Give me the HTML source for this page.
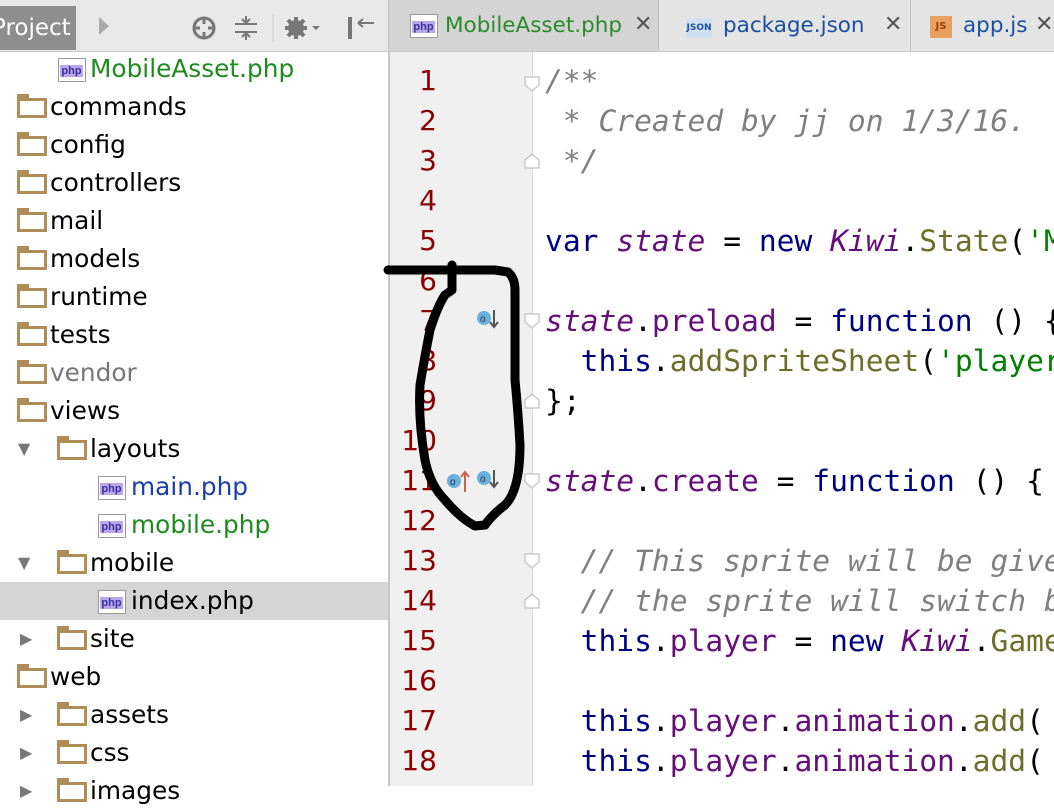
<!DOCTYPE html><html><head><style>
body{margin:0;width:1054px;height:786px;overflow:hidden;background:#fff;font-family:"DejaVu Sans",sans-serif;position:relative}
.a{position:absolute}
#hdr{left:0;top:0;width:388px;height:52px;background:#e8e8e8;border-bottom:1px solid #c8c8c8;box-sizing:border-box}
#tabs{left:390px;top:0;width:664px;height:52px;background:#e4e4e4;border-bottom:1px solid #c8c8c8;box-sizing:border-box}
#side{left:388px;top:0;width:2px;height:786px;background:#c6c6c6}
.row{position:absolute;left:0;width:388px;height:38px;font-size:24.8px;line-height:38px;color:#000;white-space:nowrap}
.fold{position:absolute;top:10px;width:30px;height:20px;border:3px solid #b08c58;box-sizing:border-box;background:#fff}
.fold:before{content:"";position:absolute;left:-3px;top:-7px;width:12px;height:5px;background:#b08c58}
.php{position:absolute;top:8px;width:26px;height:22px;background:#fff;border:1px solid #999;font-size:11px;line-height:12px;font-weight:bold;color:#3a2fa0;font-family:"Liberation Sans",sans-serif}
.php i{position:absolute;left:1px;top:6px;width:23px;height:12px;background:#b8a8e8;font-style:normal;text-align:center}
.arr{position:absolute;font-size:16px;color:#777}
#gut{left:390px;top:52px;width:142px;height:734px;background:#f0f0f0;border-right:1px solid #dcdcdc}
.ln{position:absolute;left:390px;width:47px;text-align:right;font-size:28px;color:#8b0000;font-family:"DejaVu Sans",sans-serif;height:40px;line-height:40px}
.cd{position:absolute;left:545px;font-family:"DejaVu Sans Mono",monospace;font-size:29.6px;height:40px;line-height:40px;white-space:pre;color:#000}
.k{color:#000080}.p{color:#660e7a}.pi{color:#660e7a;font-style:italic}.c{color:#808080;font-style:italic}.f{color:#6e6e2a}.s{color:#008000}
</style></head><body>
<div class="a" id="hdr">
<div class="a" style="left:0;top:6px;width:76px;height:44px;background:#8e8e8e;color:#fff;font-size:23px;line-height:44px;overflow:hidden;white-space:nowrap;text-indent:-8px">Project</div>
<div class="a" style="left:99px;top:17px;width:0;height:0;border-left:10px solid #aaa;border-top:9px solid transparent;border-bottom:9px solid transparent"></div>
<svg class="a" style="left:190px;top:14px" width="190" height="28"><circle cx="14" cy="14" r="10" fill="none" stroke="#777" stroke-width="3"/><path d="M14 4v6M14 18v6M4 14h6M18 14h6" stroke="#777" stroke-width="3"/><path d="M45 10h22M45 18h22M56 2v6M56 20v6M52 5l4 4 4-4M52 23l4-4 4 4" stroke="#777" stroke-width="2" fill="none"/><line x1="83" y1="0" x2="83" y2="28" stroke="#ccc"/><circle cx="106" cy="14" r="8" fill="#777"/><circle cx="106" cy="14" r="3" fill="#e8e8e8"/><path d="M106 3v22M95 14h22M98 6l16 16M114 6l-16 16" stroke="#777" stroke-width="4"/><path d="M122 12l4 4 4-4z" fill="#777"/><rect x="158" y="3" width="4" height="22" fill="#777"/><path d="M168 9h16M168 9l5-4M168 9l5 4" stroke="#777" stroke-width="2" fill="none"/></svg>
</div>
<div class="a" id="tabs">
<div class="a" style="left:0;top:0;width:268px;height:51px;background:#d4d4d4"></div>
<div class="php" style="left:20px;top:14px"><i>php</i></div><div class="a" style="left:55px;top:13px;font-size:21.5px;color:#2a8a2a">MobileAsset.php</div><div class="a" style="left:244px;top:12px;font-size:22px;color:#555">✕</div>
<div class="a" style="left:268px;top:0;width:1px;height:51px;background:#c0c0c0"></div>
<div class="a" style="left:296px;top:18px;width:26px;height:20px;background:#cfe0f0;font-size:9px;font-weight:bold;color:#2050a0;text-align:center;line-height:20px">JSON</div><div class="a" style="left:333px;top:13px;font-size:21.5px;color:#1b4fa0">package.json</div><div class="a" style="left:494px;top:12px;font-size:22px;color:#555">✕</div>
<div class="a" style="left:520px;top:0;width:1px;height:51px;background:#c0c0c0"></div>
<div class="a" style="left:540px;top:16px;width:22px;height:22px;background:#e8a060;font-size:10px;font-weight:bold;color:#a04000;text-align:center;line-height:22px">JS</div><div class="a" style="left:573px;top:13px;font-size:21.5px;color:#1b4fa0">app.js</div><div class="a" style="left:645px;top:12px;font-size:22px;color:#555">✕</div>
</div>
<div class="a" id="side"></div>
<div class="row" style="top:50px"><div class="php" style="left:58px"><i>php</i></div><span class="a" style="left:90px;color:#1f8a1f">MobileAsset.php</span></div>
<div class="row" style="top:88px"><div class="fold" style="left:17px"></div><span class="a" style="left:50px">commands</span></div>
<div class="row" style="top:126px"><div class="fold" style="left:17px"></div><span class="a" style="left:50px">config</span></div>
<div class="row" style="top:164px"><div class="fold" style="left:17px"></div><span class="a" style="left:50px">controllers</span></div>
<div class="row" style="top:202px"><div class="fold" style="left:17px"></div><span class="a" style="left:50px">mail</span></div>
<div class="row" style="top:240px"><div class="fold" style="left:17px"></div><span class="a" style="left:50px">models</span></div>
<div class="row" style="top:278px"><div class="fold" style="left:17px"></div><span class="a" style="left:50px">runtime</span></div>
<div class="row" style="top:316px"><div class="fold" style="left:17px"></div><span class="a" style="left:50px">tests</span></div>
<div class="row" style="top:354px"><div class="fold" style="left:17px"></div><span class="a" style="left:50px;color:#777">vendor</span></div>
<div class="row" style="top:392px"><div class="fold" style="left:17px"></div><span class="a" style="left:50px">views</span></div>
<div class="row" style="top:430px"><span class="arr" style="left:18px">▼</span><div class="fold" style="left:57px"></div><span class="a" style="left:90px">layouts</span></div>
<div class="row" style="top:468px"><div class="php" style="left:98px"><i>php</i></div><span class="a" style="left:131px;color:#1b3fa8">main.php</span></div>
<div class="row" style="top:506px"><div class="php" style="left:98px"><i>php</i></div><span class="a" style="left:131px;color:#1f8a1f">mobile.php</span></div>
<div class="row" style="top:544px"><span class="arr" style="left:18px">▼</span><div class="fold" style="left:57px"></div><span class="a" style="left:90px">mobile</span></div>
<div class="row" style="top:582px;background:#d5d5d5"><div class="php" style="left:98px"><i>php</i></div><span class="a" style="left:131px">index.php</span></div>
<div class="row" style="top:620px"><span class="arr" style="left:20px">▶</span><div class="fold" style="left:57px"></div><span class="a" style="left:90px">site</span></div>
<div class="row" style="top:658px"><div class="fold" style="left:17px"></div><span class="a" style="left:50px">web</span></div>
<div class="row" style="top:696px"><span class="arr" style="left:20px">▶</span><div class="fold" style="left:57px"></div><span class="a" style="left:90px">assets</span></div>
<div class="row" style="top:734px"><span class="arr" style="left:20px">▶</span><div class="fold" style="left:57px"></div><span class="a" style="left:90px">css</span></div>
<div class="row" style="top:772px"><span class="arr" style="left:20px">▶</span><div class="fold" style="left:57px"></div><span class="a" style="left:90px">images</span></div>
<div class="a" id="gut"></div>
<div class="ln" style="top:61px">1</div><div class="ln" style="top:101px">2</div><div class="ln" style="top:141px">3</div><div class="ln" style="top:181px">4</div><div class="ln" style="top:221px">5</div><div class="ln" style="top:261px">6</div><div class="ln" style="top:301px">7</div><div class="ln" style="top:341px">8</div><div class="ln" style="top:381px">9</div><div class="ln" style="top:421px">10</div><div class="ln" style="top:461px">11</div><div class="ln" style="top:501px">12</div><div class="ln" style="top:541px">13</div><div class="ln" style="top:581px">14</div><div class="ln" style="top:621px">15</div><div class="ln" style="top:661px">16</div><div class="ln" style="top:701px">17</div><div class="ln" style="top:741px">18</div>
<div class="cd" style="top:61px"><span class="c">/**</span></div>
<div class="cd" style="top:101px"><span class="c"> * Created by jj on 1/3/16.</span></div>
<div class="cd" style="top:141px"><span class="c"> */</span></div>
<div class="cd" style="top:221px"><span class="k">var</span> <span class="pi">state</span> = <span class="k">new</span> <span class="pi">Kiwi</span>.<span class="f">State</span>(<span class="s">'M</span></div>
<div class="cd" style="top:301px"><span class="pi">state</span>.<span class="p">preload</span> = <span class="k">function</span> () {</div>
<div class="cd" style="top:341px">  <span class="k">this</span>.<span class="f">addSpriteSheet</span>(<span class="s">'player</span></div>
<div class="cd" style="top:381px">};</div>
<div class="cd" style="top:461px"><span class="pi">state</span>.<span class="p">create</span> = <span class="k">function</span> () {</div>
<div class="cd" style="top:541px">  <span class="c">// This sprite will be give</span></div>
<div class="cd" style="top:581px">  <span class="c">// the sprite will switch b</span></div>
<div class="cd" style="top:621px">  <span class="k">this</span>.<span class="p">player</span> = <span class="k">new</span> <span class="pi">Kiwi</span>.<span class="f">Game</span></div>
<div class="cd" style="top:701px">  <span class="k">this</span>.<span class="p">player</span>.<span class="p">animation</span>.<span class="f">add</span>(</div>
<div class="cd" style="top:741px">  <span class="k">this</span>.<span class="p">player</span>.<span class="p">animation</span>.<span class="f">add</span>(</div>
<svg class="a" style="left:520px;top:0" width="24" height="786"><g fill="#fff" stroke="#ccc" stroke-width="1.5">
<path d="M5 77h14v8l-7 6-7-6z"/><path d="M5 168h14v-8l-7-6-7 6z"/><path d="M5 314h14v8l-7 6-7-6z"/><path d="M5 408h14v-8l-7-6-7 6z"/><path d="M5 474h14v8l-7 6-7-6z"/><path d="M5 554h14v8l-7 6-7-6z"/><path d="M5 608h14v-8l-7-6-7 6z"/></g></svg>
<svg class="a" style="left:380px;top:250px" width="200" height="290">
<circle cx="104" cy="68" r="7" fill="#6ab0de"/><text x="100" y="72" font-size="10" fill="#333" font-family="Liberation Sans">o</text><path d="M114 60v16M110 72l4 5 4-5" stroke="#555" stroke-width="2" fill="none"/>
<circle cx="74" cy="231" r="7" fill="#6ab0de"/><text x="70" y="235" font-size="10" fill="#333" font-family="Liberation Sans">o</text><path d="M85 242v-20M81 227l4-5 4 5" stroke="#d06050" stroke-width="2" fill="none"/>
<circle cx="104" cy="228" r="7" fill="#6ab0de"/><text x="100" y="232" font-size="10" fill="#333" font-family="Liberation Sans">o</text><path d="M114 220v16M110 232l4 5 4-5" stroke="#555" stroke-width="2" fill="none"/>
<path d="M8 20H115L128 22Q135 28 135 40V130Q138 160 140 195Q140 240 125 255Q112 265 105 275L95 276Q80 268 65 250Q50 235 45 210Q38 170 40 135Q45 105 50 80Q58 55 65 45L72 40V15" stroke="#000" stroke-width="9" fill="none" stroke-linejoin="round" stroke-linecap="round"/>
</svg>
</body></html>
